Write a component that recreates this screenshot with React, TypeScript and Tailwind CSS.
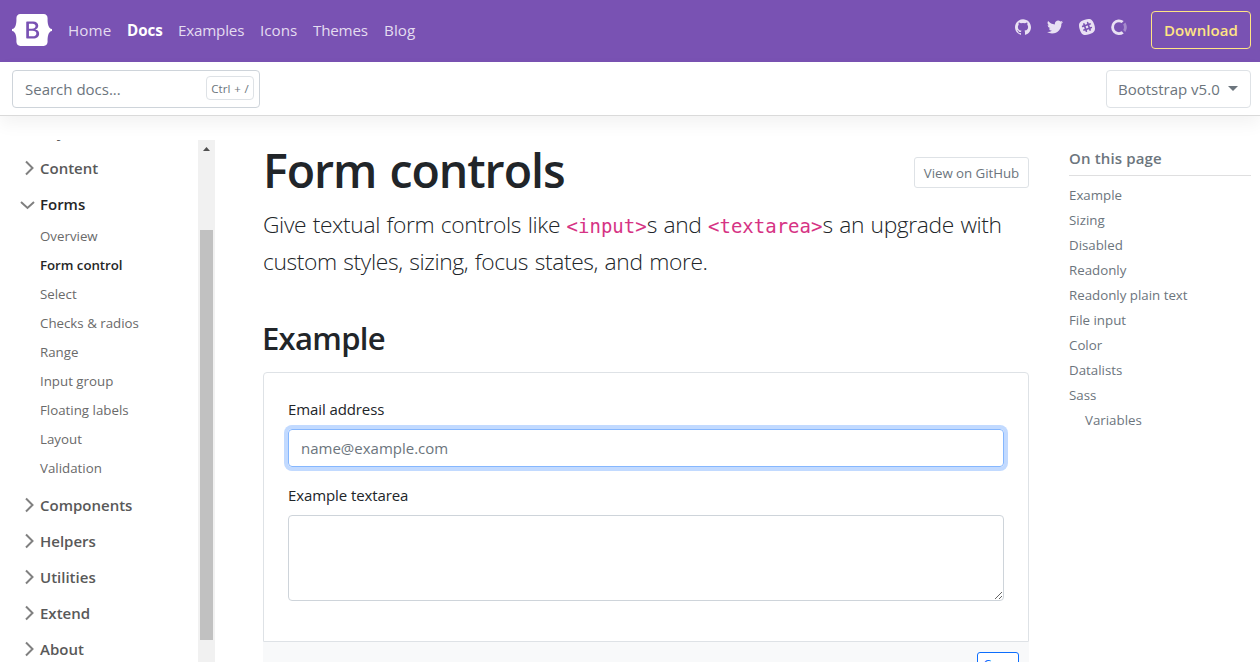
import React from "react";

const links = ["Home", "Docs", "Examples", "Icons", "Themes", "Blog"];
const linkWidths: Record<string, string> = {
  Home: "w-[59px] tracking-[0.1px]",
  Docs: "w-[51px] font-bold text-white tracking-[-0.1px]",
  Examples: "w-[82px] tracking-[-0.2px]",
  Icons: "w-[53px] tracking-[0px]",
  Themes: "w-[71px] tracking-[-0.2px]",
  Blog: "w-[48px] tracking-[0.1px]",
};
const formItems = [
  "Overview",
  "Form control",
  "Select",
  "Checks & radios",
  "Range",
  "Input group",
  "Floating labels",
  "Layout",
  "Validation",
];
const toc = [
  "Example",
  "Sizing",
  "Disabled",
  "Readonly",
  "Readonly plain text",
  "File input",
  "Color",
  "Datalists",
  "Sass",
];

function Logo() {
  return (
    <svg viewBox="0 0 118 94" className="h-8 w-10 shrink-0" fill="#fff">
      <path
        fillRule="evenodd"
        clipRule="evenodd"
        d="M24.509 0c-6.733 0-11.715 5.893-11.492 12.284.214 6.14-.064 14.092-2.066 20.577C8.943 39.365 5.547 43.485 0 44.014v5.972c5.547.529 8.943 4.649 10.951 11.153 2.002 6.485 2.28 14.437 2.066 20.577C12.794 88.106 17.776 94 24.51 94H93.5c6.733 0 11.714-5.893 11.491-12.284-.214-6.14.064-14.092 2.066-20.577 2.009-6.504 5.396-10.624 10.943-11.153v-5.972c-5.547-.529-8.934-4.649-10.943-11.153-2.002-6.484-2.28-14.437-2.066-20.577C105.214 5.894 100.233 0 93.5 0H24.508zM80 57.863C80 66.663 73.436 72 62.543 72H44a2 2 0 01-2-2V24a2 2 0 012-2h18.437c9.083 0 15.044 4.92 15.044 12.474 0 5.302-4.01 10.049-9.119 10.88v.277C75.317 46.394 80 51.21 80 57.863zM60.521 28.34H49.948v14.934h8.905c6.884 0 10.68-2.772 10.68-7.727 0-4.643-3.264-7.207-9.012-7.207zM49.948 49.2v16.458H60.91c7.167 0 10.964-2.876 10.964-8.281 0-5.406-3.903-8.178-11.425-8.178H49.948z"
      />
    </svg>
  );
}

function SocialIcons() {
  return (
    <div className="flex h-[54px] items-center gap-4 text-[#e9e1f3]">
      <svg viewBox="0 0 512 499.36" className="size-4" fill="currentColor">
        <path d="M256 0C114.64 0 0 114.61 0 256c0 113.09 73.34 209 175.08 242.9 12.8 2.35 17.47-5.56 17.47-12.34 0-6.08-.22-22.18-.35-43.54-71.2 15.49-86.2-34.34-86.2-34.34-11.64-29.57-28.42-37.45-28.42-37.45-23.27-15.84 1.73-15.55 1.73-15.55 25.69 1.81 39.21 26.38 39.21 26.38 22.84 39.12 59.92 27.82 74.5 21.27 2.33-16.54 8.94-27.82 16.25-34.22-56.84-6.43-116.6-28.43-116.6-126.49 0-27.95 10-50.8 26.35-68.69-2.63-6.48-11.42-32.5 2.51-67.75 0 0 21.49-6.88 70.4 26.24a242.65 242.65 0 0 1 128.18 0c48.87-33.13 70.33-26.24 70.33-26.24 14 35.25 5.18 61.27 2.55 67.75 16.41 17.9 26.31 40.75 26.31 68.69 0 98.35-59.85 120-116.88 126.32 9.19 7.9 17.38 23.53 17.38 47.41 0 34.22-.31 61.83-.31 70.23 0 6.85 4.61 14.81 17.6 12.31C438.72 464.97 512 369.08 512 256.02 512 114.62 397.37 0 256 0z" />
      </svg>
      <svg viewBox="0 0 512 416.32" className="size-4" fill="currentColor">
        <path d="M160.83 416.32c193.2 0 298.92-160.22 298.92-298.92 0-4.51 0-9-.2-13.52A214 214 0 0 0 512 49.38a212.93 212.93 0 0 1-60.44 16.6 105.7 105.7 0 0 0 46.3-58.19 209 209 0 0 1-66.79 25.37 105.09 105.09 0 0 0-181.73 71.91 116.12 116.12 0 0 0 2.66 24c-87.28-4.3-164.73-46.3-216.56-109.82A105.48 105.48 0 0 0 68 159.6a106.27 106.27 0 0 1-47.53-13.11v1.43a105.28 105.28 0 0 0 84.21 103.06 105.67 105.67 0 0 1-47.33 1.84 105.06 105.06 0 0 0 98.14 72.94A210.72 210.72 0 0 1 25 370.84a202.17 202.17 0 0 1-25-1.43 298.85 298.85 0 0 0 160.83 46.92" />
      </svg>
      <svg viewBox="0 0 512 512" className="size-4" fill="currentColor">
        <path d="M210.787 234.832l68.31-22.883 22.1 65.977-68.309 22.882z" />
        <path d="M490.54 185.6C437.7 9.59 361.6-31.34 185.6 21.46S-31.3 150.4 21.46 326.4 150.4 543.3 326.4 490.54 543.34 361.6 490.54 185.6zM401.7 299.8l-33.15 11.05 11.46 34.38c4.5 13.92-2.87 29.06-16.78 33.56-2.87.82-6.14 1.64-9 1.23a27.32 27.32 0 0 1-24.56-18l-11.46-34.38-68.36 22.92 11.46 34.38c4.5 13.92-2.87 29.06-16.78 33.56-2.87.82-6.14 1.64-9 1.23a27.32 27.32 0 0 1-24.56-18l-11.46-34.43-33.15 11.05c-2.87.82-6.14 1.64-9 1.23a27.32 27.32 0 0 1-24.56-18c-4.5-13.92 2.87-29.06 16.78-33.56l33.12-11.03-22.1-65.9-33.15 11.05c-2.87.82-6.14 1.64-9 1.23a27.32 27.32 0 0 1-24.56-18c-4.48-13.93 2.89-29.07 16.81-33.58l33.15-11.05-11.46-34.38c-4.5-13.92 2.87-29.06 16.78-33.56s29.06 2.87 33.56 16.78l11.46 34.38 68.36-22.92-11.46-34.38c-4.5-13.92 2.87-29.06 16.78-33.56s29.06 2.87 33.56 16.78l11.47 34.42 33.15-11.05c13.92-4.5 29.06 2.87 33.56 16.78s-2.87 29.06-16.78 33.56L329.7 194.6l22.1 65.9 33.15-11.05c13.92-4.5 29.06 2.87 33.56 16.78s-2.88 29.07-16.81 33.57z" />
      </svg>
      <svg viewBox="0 0 40 41" className="size-4" fill="currentColor">
        <path
          fillOpacity=".4"
          d="M32.8 21c0 2.4-.8 4.9-2 6.9l5.1 5.1c2.5-3.4 4.1-7.6 4.1-12 0-4.6-1.6-8.8-4-12.2L30.7 14c1.2 2 2 4.3 2 7z"
        />
        <path d="M20 33.7a12.8 12.8 0 0 1 0-25.6c2.6 0 5 .7 7 2.1L32 5a20 20 0 1 0 .1 31.9l-5-5.2a13 13 0 0 1-7 2z" />
      </svg>
    </div>
  );
}

function Section({ label, open = false }: { label: string; open?: boolean }) {
  return (
    <div className="mb-1 flex h-8 items-center">
      <svg
        viewBox="0 0 16 16"
        className={open ? "mr-1 size-4 translate-y-px rotate-90" : "mr-1 size-4"}
        fill="none"
        stroke="#808080"
        strokeWidth="2"
      >
        {open ? <path d="M5 15l6-6.5L5 2" /> : <path d="M6 1.5l6.5 6.5L6 14.5" />}
      </svg>
      <span
        className={
          open
            ? "pt-px text-[15px] font-semibold text-[#262626]"
            : "pt-px text-[15px] font-semibold text-[#595959]"
        }
      >
        {label}
      </span>
    </div>
  );
}

function Sidebar() {
  return (
    <aside className="mt-6 flex h-[522px] w-[215px] shrink-0 overflow-hidden">
      <nav className="-mt-6 w-[198px] pl-5">
        <Section label="Layout" />
        <Section label="Content" />
        <Section label="Forms" open />
        <ul className="mb-[6px] -mt-[2px] pl-5 text-[13.3px] text-[#6a6a6a]">
          {formItems.map((item) => (
            <li
              key={item}
              className={
                item === "Form control"
                  ? "h-[29px] font-semibold leading-[29px] tracking-[-0.05px] text-[#262626]"
                  : "h-[29px] leading-[29px]"
              }
            >
              {item}
            </li>
          ))}
        </ul>
        <Section label="Components" />
        <Section label="Helpers" />
        <Section label="Utilities" />
        <Section label="Extend" />
        <Section label="About" />
      </nav>
      <div className="flex h-[522px] w-[17px] flex-col items-center bg-[#f1f1f1]">
        <svg viewBox="0 0 17 17" className="h-[17px] w-[17px]" fill="#505050">
          <path d="M5 11L8.5 7L12 11z" />
        </svg>
        <div className="mt-[73px] h-[410px] w-[13px] bg-[#c1c1c1]" />
      </div>
    </aside>
  );
}

export default function App() {
  return (
    <div className="flex h-[662px] w-[1260px] flex-col overflow-hidden bg-white font-['Open_Sans',sans-serif] text-[16px] text-[#212529]">
      <header className="flex h-[62px] shrink-0 items-start bg-[#7952b3] pl-3 pr-[9px]">
        <div className="flex h-[60px] flex-1 items-center">
          <Logo />
          <nav className="ml-4 flex h-6 items-center text-[#e4dcf0]">
            {links.map((l) => (
              <a key={l} className={`block whitespace-nowrap text-[15.2px] leading-6 ${linkWidths[l]}`}>
                {l}
              </a>
            ))}
          </nav>
        </div>
        <SocialIcons />
        <button className="ml-6 mt-[11px] h-[38px] w-[100px] rounded border border-[#ffe484] pt-px text-[15px] font-semibold tracking-[0.1px] text-[#ffe484]">
          Download
        </button>
      </header>

      <div className="relative flex h-[54px] shrink-0 items-start justify-between border-b border-[#dadada] bg-white pl-3 pr-[9px] pt-2 shadow-[0_8px_16px_rgba(0,0,0,0.05)]">
        <div className="flex h-[38px] w-[248px] items-center justify-between rounded border border-[#ced4da] pl-3 pr-[5px]">
          <span className="text-[15px] leading-6 text-[#6c757d]">Search docs...</span>
          <kbd className="mb-0.5 flex h-6 w-12 items-center justify-center rounded-sm border border-[#dee2e6] pt-px font-['Open_Sans',sans-serif] text-[11.5px] tracking-[0.1px] [word-spacing:0.5px] text-[#6c757d]">
            Ctrl + /
          </kbd>
        </div>
        <button className="flex h-[38px] w-[145px] items-center justify-between rounded border border-[#dee2e6] pl-[11px] pr-3 text-[#6c757d]">
          <span className="whitespace-nowrap text-[15px] leading-6">Bootstrap v5.0</span>
          <svg viewBox="0 0 10 5" className="-mt-0.5 h-[5px] w-[10px]" fill="#6c757d">
            <path d="M0 0H10L5 5z" />
          </svg>
        </button>
      </div>

      <div className="flex min-h-0 flex-1">
        <Sidebar />
        <main className="ml-12 w-[766px] shrink-0">
          <div className="flex h-[111px] pt-[26px]">
            <h1 className="flex-1 whitespace-nowrap text-[46.5px] font-semibold leading-[57px] tracking-[-1.05px] [word-spacing:2px]">
              Form controls
            </h1>
            <button className="mt-[15px] h-[31px] w-[115px] whitespace-nowrap rounded-[3px] border border-[#dee2e6] pt-[2px] text-[13.3px] tracking-[-0.05px] text-[#6c757d]">
              View on GitHub
            </button>
          </div>
          <p className="-mt-[21px] whitespace-nowrap text-[22.8px] font-light leading-[37px] tracking-[-0.37px] [word-spacing:1px]">
            Give textual form controls like{" "}
            <code className="font-['DejaVu_Sans_Mono',monospace] text-[19px] font-normal leading-none tracking-normal text-[#d63384]">
              &lt;input&gt;
            </code>
            s and{" "}
            <code className="font-['DejaVu_Sans_Mono',monospace] text-[19px] font-normal leading-none tracking-normal text-[#d63384]">
              &lt;textarea&gt;
            </code>
            s an upgrade with
            <br />
            custom styles, sizing, focus states, and more.
          </p>
          <h2 className="-ml-px mt-[39px] text-[31px] font-semibold leading-[38px] tracking-[-0.7px]">Example</h2>
          <section className="mt-[15px] h-[270px] rounded-t border border-[#dee2e6] px-6 pt-6">
            <label className="block h-8 text-[15px] leading-6 tracking-[-0.1px]">Email address</label>
            <input
              className="block h-[38px] w-full rounded border border-[#86b7fe] px-3 text-[15px] tracking-[0px] shadow-[0_0_0_4px_#c2daff] outline-none placeholder:text-[#6c757d]"
              placeholder="name@example.com"
            />
            <label className="mt-4 block h-8 text-[15px] leading-6 tracking-[-0.1px]">Example textarea</label>
            <textarea className="block h-[86px] w-full resize-y rounded border border-[#ced4da]" />
          </section>
          <div className="flex h-[40px] justify-end bg-[#f8f9fa] pr-[10px] pt-[10px]">
            <button className="flex h-[29px] w-[42px] items-start justify-center rounded-[3px] border border-[#0d6efd] bg-white pt-[3px] text-[12.5px] leading-[18px] text-[#0d6efd]">
              Copy
            </button>
          </div>
        </main>
        <aside className="ml-10 w-[182px] shrink-0 pt-[30px] text-[#6c757d]">
          <h3 className="h-[30px] border-b border-[#dfdfe0] text-[15px] font-semibold leading-[24px] tracking-[0.15px]">
            On this page
          </h3>
          <ul className="pt-[7px] text-[13.3px] leading-[25px]">
            {toc.map((t) => (
              <li key={t}>{t}</li>
            ))}
            <li className="pl-4">Variables</li>
          </ul>
        </aside>
      </div>
    </div>
  );
}
